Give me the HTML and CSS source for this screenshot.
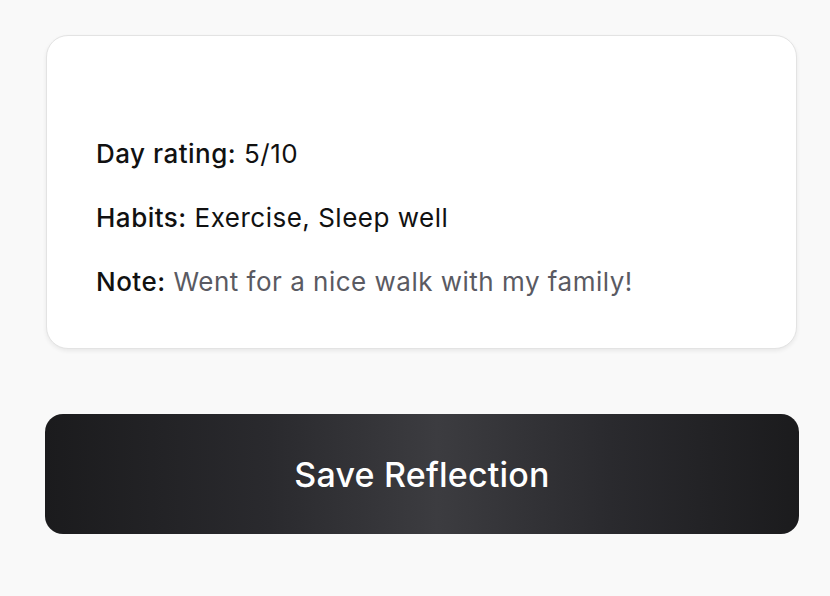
FILE: index.html
```html
<!DOCTYPE html>
<html>
<head>
<meta charset="utf-8">
<link rel="stylesheet" href="styles.css">
</head>
<body>
<main class="page">
  <section class="card">
    <p class="row"><span class="label">Day rating:</span> 5/10</p>
    <p class="row"><span class="label">Habits:</span> Exercise, Sleep well</p>
    <p class="row"><span class="label">Note:</span> <span class="note">Went for a nice walk with my family!</span></p>
  </section>
  <button class="save">Save Reflection</button>
</main>
</body>
</html>
```
FILE: styles.css
```css
html, body {
  margin: 0;
  padding: 0;
  background: #f9f9f9;
}
body {
  font-family: Inter, "Noto Sans", sans-serif;
  color: #111;
}
.page {
  width: 830px;
  height: 596px;
  box-sizing: border-box;
  padding: 35px 31px 0 45px;
  display: flex;
  flex-direction: column;
}
.card {
  margin-left: 1px;
  margin-right: 2px;
  height: 314px;
  box-sizing: border-box;
  background: #fff;
  border: 1.5px solid #e3e3e3;
  border-radius: 22px;
  box-shadow: 0 2px 4px rgba(0,0,0,0.07);
  padding: 98px 50px 0 49px;
  display: flex;
  flex-direction: column;
  gap: 25px;
}
.row {
  margin: 0;
  font-size: 26px;
  line-height: 39px;
  letter-spacing: 0.5px;
}
.label {
  font-weight: 500;
}
.note {
  color: #5a5a62;
}
.save {
  margin-top: 65px;
  height: 120px;
  border: none;
  border-radius: 18px;
  background: linear-gradient(90deg, #1b1b1d 0%, #2a2a2e 30%, #3c3c40 52%, #2a2a2e 75%, #1b1b1d 100%);
  color: #fff;
  font-family: Inter, "Noto Sans", sans-serif;
  font-size: 34px;
  font-weight: 500;
  letter-spacing: 0.2px;
}
```
